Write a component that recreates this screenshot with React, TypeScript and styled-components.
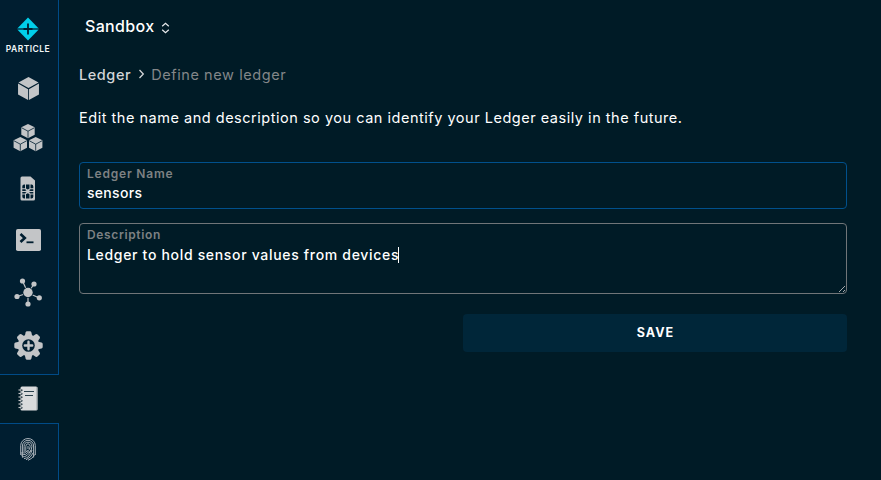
import React from 'react';
import styled, { createGlobalStyle } from 'styled-components';

const Global = createGlobalStyle`
  * { box-sizing: border-box; }
  body { margin: 0; background: #001b26; font-family: Inter, "Open Sans", sans-serif; }
`;

const Page = styled.div`
  display: flex;
  width: 881px;
  height: 480px;
  overflow: hidden;
  background: #001b26;
`;

const Sidebar = styled.nav`
  width: 59px;
  flex: none;
  display: flex;
  flex-direction: column;
`;

const Brand = styled.div`
  height: 63px;
  flex: none;
  padding: 17px 2px 0 0;
  display: flex;
  flex-direction: column;
  align-items: center;
  background: #001e30;
  border-right: 1px solid #004b87;
`;

const BrandName = styled.span`
  margin-top: 2px;
  font-size: 8.5px;
  line-height: 12px;
  font-weight: 600;
  letter-spacing: 0.45px;
  color: #f2f6f8;
`;

const NavItem = styled.a<{ $height: number; $active?: boolean; $lift?: number; $inset?: number }>`
  height: ${(p) => p.$height}px;
  flex: none;
  display: flex;
  align-items: center;
  justify-content: center;
  color: #c3c5c7;
  background: ${(p) => (p.$active ? '#001b26' : '#001e30')};
  border: 0 solid #004b87;
  border-width: ${(p) => (p.$active ? '1px 0' : '0 1px 0 0')};
  padding: 0 ${(p) => p.$inset ?? 2}px ${(p) => p.$lift ?? 0}px 0;
`;

const Main = styled.main`
  width: 768px;
  margin-left: 20px;
  display: flex;
  flex-direction: column;
`;

const Product = styled.header`
  display: flex;
  align-items: center;
  gap: 7px;
  height: 24px;
  margin: 14px 0 0 6px;
  color: #fff;
  font-size: 16px;
  font-weight: 500;
  letter-spacing: 0.33px;
  svg { margin-top: 3px; }
`;

const Crumbs = styled.div`
  display: flex;
  align-items: center;
  height: 20px;
  margin-top: 26px;
  font-size: 14.5px;
  font-weight: 500;
  letter-spacing: 0.56px;
  color: #d3d6d8;
  svg { margin: 0 6px 0 7px; }
`;

const Current = styled.span`
  font-weight: 400;
  letter-spacing: 0.58px;
  color: #838789;
`;

const Intro = styled.p`
  margin: 24px 0 0;
  height: 20px;
  line-height: 20px;
  font-size: 14.5px;
  letter-spacing: 0.52px;
  white-space: nowrap;
  color: #fff;
`;

const Field = styled.div<{ $height: number; $line: string; $gap: number }>`
  position: relative;
  height: ${(p) => p.$height}px;
  margin-top: ${(p) => p.$gap}px;
  padding: 2px 7px;
  border: 1px solid ${(p) => p.$line};
  border-radius: 4px;
`;

const Label = styled.div<{ $tracking: number }>`
  height: 18px;
  line-height: 18px;
  font-size: 12px;
  font-weight: 600;
  letter-spacing: ${(p) => p.$tracking}px;
  color: #7d8183;
`;

const Value = styled.div<{ $shift?: number; $tracking: number }>`
  display: flex;
  align-items: center;
  height: 20px;
  margin-top: ${(p) => p.$shift ?? 0}px;
  line-height: 20px;
  font-size: 14px;
  font-weight: 500;
  letter-spacing: ${(p) => p.$tracking}px;
  color: #fff;
`;

const Caret = styled.i`
  width: 1px;
  height: 16px;
  margin-left: -1px;
  background: #fff;
`;

const Grip = styled.svg`
  position: absolute;
  right: 0;
  bottom: 0;
`;

const SaveButton = styled.button`
  align-self: flex-end;
  width: 384px;
  height: 38px;
  margin-top: 20px;
  padding: 0 0 2px 1px;
  border: 0;
  border-radius: 4px;
  background: #002639;
  color: #fff;
  font-family: inherit;
  font-size: 12.5px;
  font-weight: 700;
  letter-spacing: 1px;
`;

const Cube = () => (
  <svg width="21" height="23" viewBox="0 0 20 22">
    <path d="M10 0 19.6 5.2 10 10.6.4 5.2ZM0 6.2l9.6 5.4V22L0 16.8ZM20 6.2l-9.6 5.4V22L20 16.8Z" fill="currentColor" />
  </svg>
);

const Cubes = () => (
  <svg width="30" height="28" viewBox="0 0 30 28">
    {[[8, 0], [0.3, 13], [15.7, 13]].map(([x, y]) => (
      <g key={x} transform={`translate(${x} ${y})`}>
        <path d="M7 0 13.7 3.3V10.7L7 14.2.3 10.7V3.3Z" fill="currentColor" />
        <path d="M.5 3.7 7 7.2l6.5-3.5M7 7.2v6.6" fill="none" stroke="#001e30" strokeWidth=".8" />
      </g>
    ))}
  </svg>
);

const Sim = () => (
  <svg width="16" height="25" viewBox="0 0 16 25">
    <path d="M2 .5H10.500l4.500 4v18.500a1.500 1.500 0 0 1-1.500 1.500h-11.500A1.500 1.500 0 0 1 .500 23V2A1.500 1.500 0 0 1 2 .500Z" fill="currentColor" />
    <g fill="#001e30">
      <path d="M4.500 8.500H5V12.200H2.300V10.500a2 2 0 0 1 2.200-2ZM11 8.500h-.500v3.700h2.800V10.500a2 2 0 0 0-2.300-2ZM6 8.500h3.500v4L7.800 13.500 6 12.500Z" />
      <path d="M4.500 22.500H5V18.600H2.300v1.900a2 2 0 0 0 2.200 2ZM11 22.500h-.500v-3.900h2.800v1.900a2 2 0 0 1-2.300 2ZM6 22.500h3.500v-4.300L7.800 17.300 6 18.200Z" />
      <path d="M2.300 13.300H5l1.500 1-1.500.700H2.300ZM13.300 13.300h-2.800l-1.500 1 1.500.700h2.800ZM2.300 16H5l1.500.500L5 17.600H2.300ZM13.300 16h-2.800l-1.500.500 1.500 1.100h2.800Z" />
    </g>
  </svg>
);

const Terminal = () => (
  <svg width="25" height="22" viewBox="0 0 25 22">
    <rect width="25" height="22" rx="1.8" fill="currentColor" />
    <path d="m4.500 5 4.300 4-4.300 4" fill="none" stroke="#001e30" strokeWidth="2.600" />
    <path d="M10.500 13.300h7" stroke="#001e30" strokeWidth="1.800" />
  </svg>
);

const Network = () => (
  <svg width="28" height="29" viewBox="0 0 28 29">
    <g stroke="currentColor" strokeWidth="1.200">
      <path d="M14 15 8.500 3M14 15 20 6M14 15 3 18.500M14 15l11.500 5M14 15v11" />
    </g>
    <g fill="currentColor">
      <circle cx="14" cy="14.500" r="5.400" fill="#001e30" />
      <circle cx="14" cy="14.500" r="4.700" />
      <circle cx="8.500" cy="3" r="2.600" />
      <circle cx="20" cy="6" r="2.600" />
      <circle cx="3" cy="18.500" r="2.600" />
      <circle cx="25.300" cy="19.800" r="2.600" />
      <circle cx="14" cy="26" r="2.600" />
    </g>
  </svg>
);

const Gear = () => (
  <svg width="29" height="29" viewBox="0 0 29 29">
    <circle cx="14.500" cy="14.500" r="10.700" fill="currentColor" />
    {[0, 45, 90, 135, 180, 225, 270, 315].map((a) => (
      <path key={a} transform={`rotate(${a} 14.500 14.500)`} d="M10.800 5 11.600 1.500Q11.900.300 13 .300h3q1.100 0 1.400 1.200L18.200 5Z" fill="currentColor" />
    ))}
    <circle cx="14.500" cy="14.500" r="6.300" fill="#001e30" />
    <path d="M14.500 10.800v7.400M10.800 14.500h7.400" stroke="currentColor" strokeWidth="2.400" strokeLinecap="round" />
  </svg>
);

const Notebook = () => (
  <svg width="20" height="25" viewBox="0 0 20 25">
    <rect x="2.500" y=".500" width="17" height="24" rx="1.500" fill="#d9dbdc" />
    <path d="M18.900 1v23" stroke="#a4aaad" />
    <path d="M6 5.500h10M7 9.500h8" stroke="#29414c" strokeWidth="1.200" />
    {[4, 7.5, 11, 14.5, 18, 21.5].map((y) => (
      <g key={y}>
        <circle cx="3.500" cy={y + 0.3} r="1" fill="#001b26" />
        <path d={`M.5 ${y}H3.5`} stroke="#c3c5c7" strokeWidth="1.200" />
      </g>
    ))}
  </svg>
);

const Fingerprint = () => (
  <svg width="16" height="23" viewBox="0 0 16 23" fill="none" stroke="#a9b2b9" strokeWidth="1">
    <path d="M.700 17V7.500a7.300 7 0 0 1 14.600 0V17M2.400 19.500V8a5.600 5.700 0 0 1 11.200 0v11.500M4.100 14V8.500a3.900 4.300 0 0 1 7.800 0q0 4-3 6.500M5.800 13.500v-5a2.200 2.700 0 0 1 4.400 0q0 3-3 5M8 8v3" />
    <path d="M.700 15Q5 16 8 12.500M1 17q5 .500 8-3.500M2 19q6 0 9-7M4 20.700q6-1 8-8.700M6 21.800q5-2 7.500-7.500M8 22.300q4-1 7-6" />
  </svg>
);

export default function App() {
  return (
    <>
      <Global />
      <Page>
        <Sidebar>
          <Brand>
            <svg width="22" height="24" viewBox="0 0 22 24">
              <path d="M11 .500 21.500 11.200v1.600L11 23.500.500 12.800v-1.600Z" fill="#00cfea" />
              <path d="M0 12h22" stroke="#001e30" strokeWidth="1.300" />
              <path d="M11 6.500v11M6.500 12h9" stroke="#001e30" strokeWidth="1.800" />
            </svg>
            <BrandName>PARTICLE</BrandName>
          </Brand>
          <NavItem $height={51} $inset={1}><Cube /></NavItem>
          <NavItem $height={49} $lift={1}><Cubes /></NavItem>
          <NavItem $height={52} $lift={1}><Sim /></NavItem>
          <NavItem $height={50} $inset={1}><Terminal /></NavItem>
          <NavItem $height={54}><Network /></NavItem>
          <NavItem $height={55} $lift={2} $inset={1}><Gear /></NavItem>
          <NavItem $height={50} $active $lift={1} $inset={3}><Notebook /></NavItem>
          <NavItem $height={56} $lift={5}><Fingerprint /></NavItem>
        </Sidebar>
        <Main>
          <Product>
            Sandbox
            <svg width="9" height="12" viewBox="0 0 9 12" fill="none" stroke="#e8ebed" strokeWidth="1.200">
              <path d="M1.200 4.300 4.500 1.200l3.300 3.100M1.200 7.700l3.300 3.100 3.300-3.100" />
            </svg>
          </Product>
          <Crumbs>
            Ledger
            <svg width="7" height="10" viewBox="0 0 7 10" fill="none" stroke="#d3d6d8" strokeWidth="1.300">
              <path d="m1.500 1 3.800 4-3.800 4" />
            </svg>
            <Current>Define new ledger</Current>
          </Crumbs>
          <Intro>Edit the name and description so you can identify your Ledger easily in the future.</Intro>
          <Field $height={47} $line="#00508c" $gap={34}>
            <Label $tracking={0.8}>Ledger Name</Label>
            <Value $tracking={0.3}>sensors</Value>
          </Field>
          <Field $height={71} $line="#707578" $gap={14}>
            <Label $tracking={0.64}>Description</Label>
            <Value $shift={1} $tracking={0.68}>Ledger to hold sensor values from devices<Caret /></Value>
            <Grip width="8" height="8" viewBox="0 0 8 8" stroke="#b4b8ba" strokeWidth=".900">
              <path d="M1 7 7 1M5 7l2-2" />
            </Grip>
          </Field>
          <SaveButton>SAVE</SaveButton>
        </Main>
      </Page>
    </>
  );
}
